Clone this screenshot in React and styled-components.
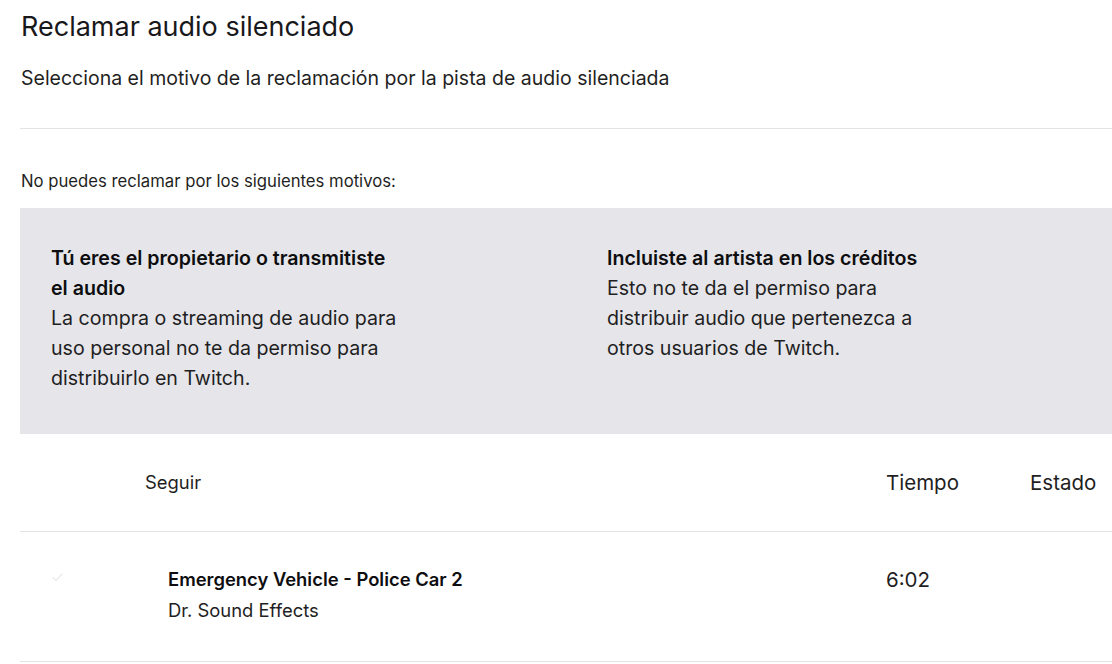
import React from 'react';
import styled, { createGlobalStyle } from 'styled-components';

const GlobalStyle = createGlobalStyle`
    body {
        margin: 0;
        background: #fff;
        font-family: Inter, "Noto Sans", sans-serif;
        color: #0e0e10;
        overflow: hidden;
    }
`;

const Page = styled.div`
    padding-left: 20px;
    width: 1092px;
`;

const Title = styled.h1`
    margin: 12px 0 0 1px;
    font-size: 27px;
    line-height: 30px;
    font-weight: 400;
    color: #18181b;
`;

const Subtitle = styled.p`
    margin: 26px 0 0 1px;
    font-size: 19.5px;
    line-height: 20px;
    color: #1f1f23;
`;

const Divider = styled.hr`
    margin: ${props => props.top || 0}px 0 0;
    border: 0;
    border-top: 1px solid #e3e3e6;
`;

const Notice = styled.p`
    margin: 42px 0 0 1px;
    font-size: 16.7px;
    line-height: 20px;
    color: #1f1f23;
`;

const ReasonBox = styled.section`
    margin-top: 17px;
    height: 226px;
    box-sizing: border-box;
    background: #e6e6ea;
    padding: 35px 0 0 31px;
    display: grid;
    grid-template-columns: 556px 1fr;
`;

const Reason = styled.div`
    font-size: 19.6px;
    line-height: 30px;
    color: #1f1f23;
    white-space: nowrap;
`;

const ReasonTitle = styled.div`
    font-weight: 600;
    color: #0e0e10;
`;

const TableRow = styled.div`
    display: grid;
    grid-template-columns: 125px 741px 144px 1fr;
    box-sizing: border-box;
    height: ${props => props.height}px;
    align-items: ${props => (props.head ? 'center' : 'start')};
    padding-top: ${props => props.pad || 0}px;
    border-bottom: 1px solid #e3e3e6;
    font-size: 18.4px;
    line-height: 31px;
    color: #1f1f23;
    white-space: nowrap;
`;

const CheckCell = styled.div`
    display: flex;
    align-items: center;
    height: 27px;
    padding-left: 32px;
`;

const Track = styled.div`
    padding-left: ${props => props.indent || 0}px;
`;

const TrackName = styled.div`
    font-weight: 600;
    color: #0e0e10;
`;

const Meta = styled.div`
    font-size: 20.5px;
`;

const Check = () => (
    <svg width="11" height="9" viewBox="0 0 11 9">
        <path
            d="M1 4.5 L4 7.5 L10 1"
            fill="none"
            stroke="#ececee"
            strokeWidth="1.4"
            strokeLinecap="round"
            strokeLinejoin="round"
        />
    </svg>
);

const reasons = [
    {
        title: ['Tú eres el propietario o transmitiste', 'el audio'],
        body: [
            'La compra o streaming de audio para',
            'uso personal no te da permiso para',
            'distribuirlo en Twitch.'
        ]
    },
    {
        title: ['Incluiste al artista en los créditos'],
        body: [
            'Esto no te da el permiso para',
            'distribuir audio que pertenezca a',
            'otros usuarios de Twitch.'
        ]
    }
];

export default function App() {
    return (
        <Page>
            <GlobalStyle />
            <Title>Reclamar audio silenciado</Title>
            <Subtitle>
                Selecciona el motivo de la reclamación por la pista de audio silenciada
            </Subtitle>
            <Divider top={40} />
            <Notice>No puedes reclamar por los siguientes motivos:</Notice>
            <ReasonBox>
                {reasons.map((r, i) => (
                    <Reason key={i}>
                        {r.title.map(t => (
                            <ReasonTitle key={t}>{t}</ReasonTitle>
                        ))}
                        {r.body.map(b => (
                            <div key={b}>{b}</div>
                        ))}
                    </Reason>
                ))}
            </ReasonBox>
            <TableRow head height={98}>
                <div />
                <Track>Seguir</Track>
                <Meta>Tiempo</Meta>
                <Meta>Estado</Meta>
            </TableRow>
            <TableRow height={130} pad={32}>
                <CheckCell>
                    <Check />
                </CheckCell>
                <Track indent={23}>
                    <TrackName>Emergency Vehicle - Police Car 2</TrackName>
                    <div>Dr. Sound Effects</div>
                </Track>
                <Meta>6:02</Meta>
                <div />
            </TableRow>
        </Page>
    );
}
